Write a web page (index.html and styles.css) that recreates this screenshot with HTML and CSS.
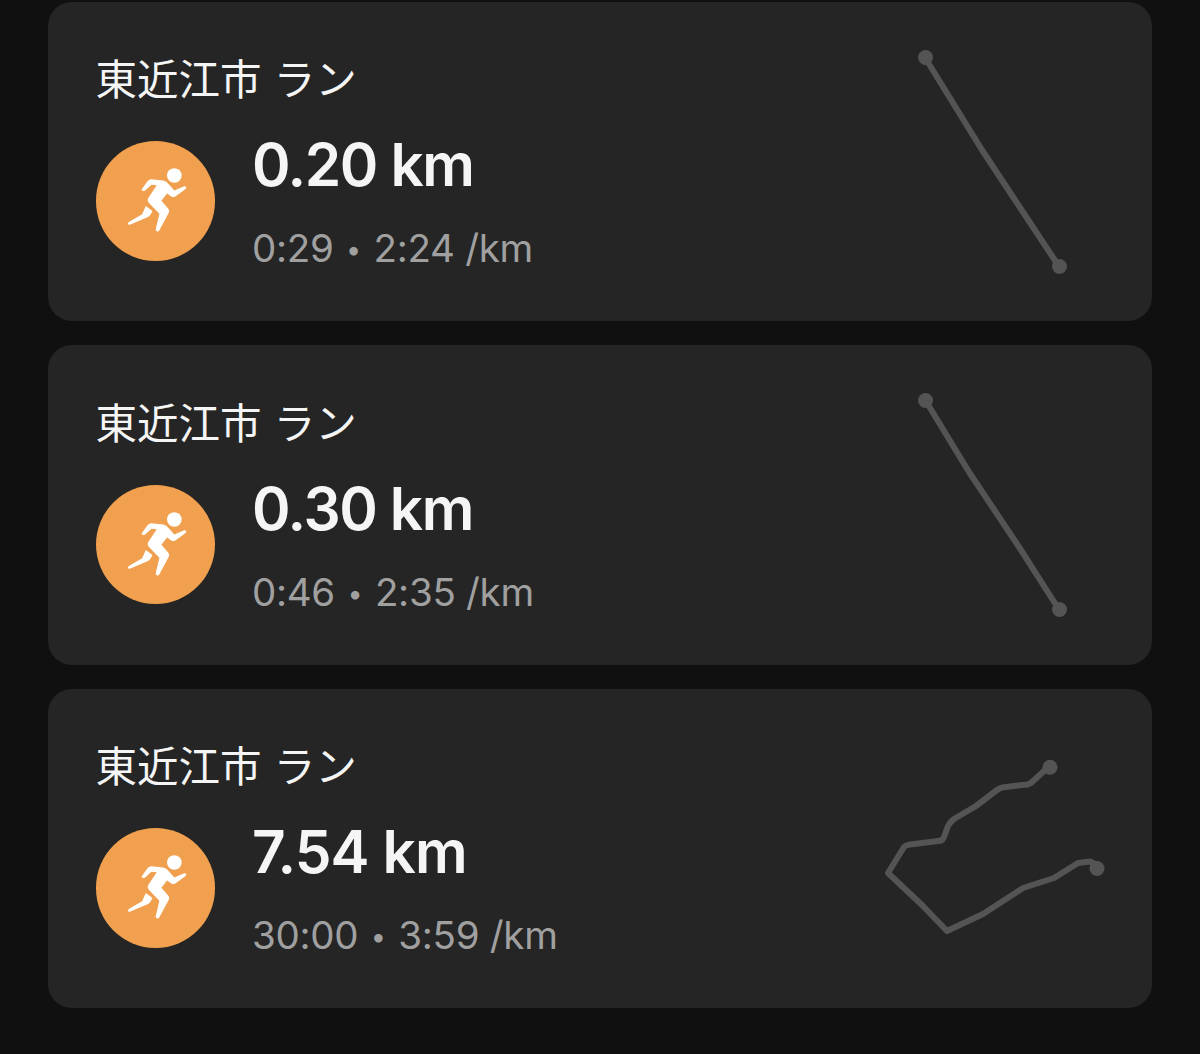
FILE: index.html
```html
<!DOCTYPE html>
<html lang="ja">
<head>
    <meta charset="UTF-8">
    <meta name="viewport" content="width=device-width, initial-scale=1.0">
    <title>東近江市 ラン</title>
    <link rel="stylesheet" href="styles.css">
</head>
<body>
    <!-- Shared runner icon -->
    <svg class="icon-defs" aria-hidden="true">
        <symbol id="runner" viewBox="0 0 360 360">
            <circle cx="236" cy="104" r="22"/>
            <path d="M138 145 L155 121 Q160 115 167 115 L202 119 Q209 120 215 126 L236 149 L264 137 Q270 135 272 139 Q273 142 268 146 L239 167 Q233 171 227 167 L214 158 L197 180 L218 204 Q222 209 220 215 L191 269 Q188 274 183 272 Q179 270 180 265 L191 219 L159 186 Q153 179 158 171 L183 133 L167 132 L148 149 Q144 152 140 150 Q137 148 138 145 Z"/>
            <path d="M150 196 L170 211 L165 221 Q162 227 155 230 L102 252 Q97 253 96 249 Q96 246 100 243 L139 221 Z"/>
        </symbol>
    </svg>

    <div class="activity-list">
        <div class="card">
            <div class="activity">
                <h2 class="title">東近江市 ラン</h2>
                <div class="summary">
                    <div class="badge"><svg><use href="#runner"/></svg></div>
                    <div class="stats">
                        <p class="distance">0.20 km</p>
                        <p class="pace">0:29<span class="dot">•</span>2:24 /km</p>
                    </div>
                </div>
            </div>
            <svg class="route" viewBox="0 0 240 240">
                <path d="M53 15.5 L110 108 L187 224.5"/>
                <circle cx="53.5" cy="15.5" r="7.5"/>
                <circle cx="187.5" cy="224.5" r="7.5"/>
            </svg>
        </div>

        <div class="card">
            <div class="activity">
                <h2 class="title">東近江市 ラン</h2>
                <div class="summary">
                    <div class="badge"><svg><use href="#runner"/></svg></div>
                    <div class="stats">
                        <p class="distance">0.30 km</p>
                        <p class="pace">0:46<span class="dot">•</span>2:35 /km</p>
                    </div>
                </div>
            </div>
            <svg class="route" viewBox="0 0 240 240">
                <path d="M53.5 15.5 L97 87 L147 162 L187 224.5"/>
                <circle cx="53.5" cy="15.5" r="7.5"/>
                <circle cx="187.5" cy="224.5" r="7.5"/>
            </svg>
        </div>

        <div class="card">
            <div class="activity">
                <h2 class="title">東近江市 ラン</h2>
                <div class="summary">
                    <div class="badge"><svg><use href="#runner"/></svg></div>
                    <div class="stats">
                        <p class="distance distance-wide">7.54 km</p>
                        <p class="pace">30:00<span class="dot">•</span>3:59 /km</p>
                    </div>
                </div>
            </div>
            <svg class="route" viewBox="0 0 240 240">
                <path d="M178 38 L172 42 L159 54 Q156 56 151 56 L134 58 Q129 58 125 61 L104 77 L82 90 Q78 93 76 97 L72 108 Q71 112 66 112 L38 115.5 Q34 116 32 118 L16 144 L50 176 L75 202 L111 185 L151 159 L182 149 L206 134 L218 132.5 L223 135"/>
                <circle cx="178" cy="38.3" r="7.5"/>
                <circle cx="225" cy="139.5" r="7.5"/>
            </svg>
        </div>
    </div>
</body>
</html>
```
FILE: styles.css
```css
body {
    margin: 0;
    background-color: #101010;
    color: #f5f5f5;
    font-family: Inter, "Noto Sans CJK JP", sans-serif;
}

.icon-defs {
    display: none;
}

.activity-list {
    display: flex;
    flex-direction: column;
    gap: 24px;
    padding: 1.75px 48px 46px;
}

.card {
    box-sizing: border-box;
    display: flex;
    justify-content: space-between;
    align-items: center;
    height: 319.5px;
    padding: 0 40px 0 47.5px;
    border-radius: 24px;
    background-color: #252525;
}

.activity {
    align-self: flex-start;
    padding-top: 45.5px;
}

.title {
    margin: 0 0 22px;
    font-family: "Noto Sans CJK JP", sans-serif;
    font-size: 41.5px;
    font-weight: 400;
    line-height: 60px;
    word-spacing: 3px;
}

.summary {
    display: flex;
    align-items: center;
    gap: 37px;
}

.badge {
    width: 119.5px;
    height: 119.5px;
    border-radius: 50%;
    background-color: #f0a04f;
}

.badge svg {
    display: block;
    width: 100%;
    height: 100%;
    fill: #fff;
}

.stats {
    display: flex;
    flex-direction: column;
    gap: 23px;
}

.distance,
.pace {
    margin: 0;
    white-space: nowrap;
}

.distance {
    font-size: 58.5px;
    font-weight: 600;
    line-height: 72px;
    letter-spacing: -1.4px;
}

.distance-wide {
    letter-spacing: -0.9px;
}

.pace {
    color: #a0a0a0;
    font-size: 38.5px;
    line-height: 48px;
    letter-spacing: -0.3px;
}

.dot {
    display: inline-block;
    width: 40px;
    font-size: 27px;
    line-height: 1;
    text-align: center;
    vertical-align: 3px;
}

.route {
    width: 240px;
    height: 240px;
    fill: #545454;
}

.route path {
    fill: none;
    stroke: #545454;
    stroke-width: 6;
    stroke-linejoin: round;
}
```
